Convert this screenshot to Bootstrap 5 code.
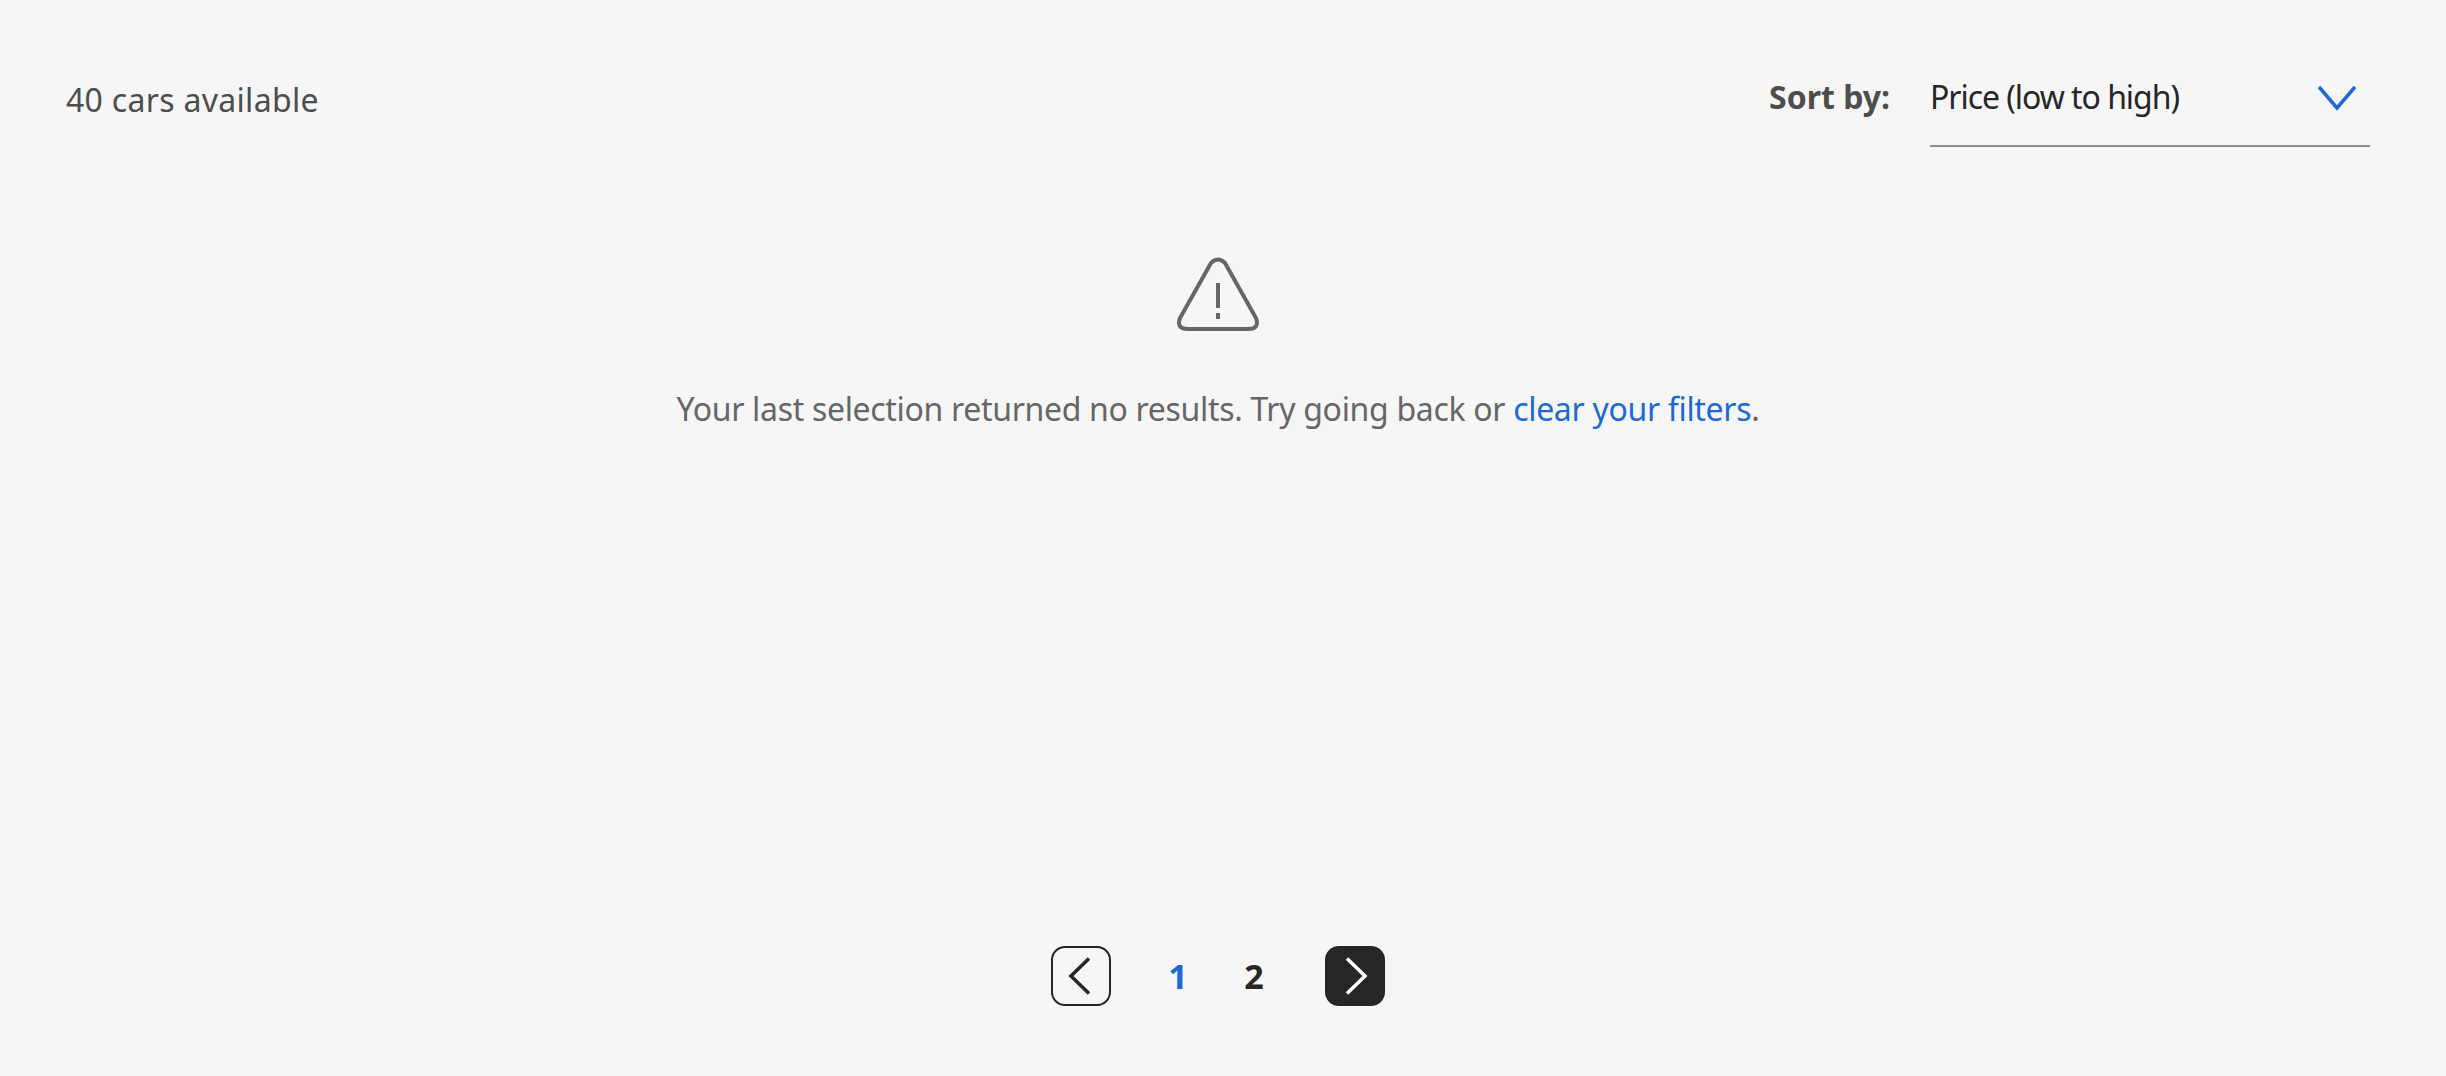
<!DOCTYPE html>
<html lang="en">
<head>
    <meta charset="UTF-8">
    <meta name="viewport" content="width=device-width, initial-scale=1.0">
    <title>Cars</title>
    <link href="https://cdn.jsdelivr.net/npm/bootstrap@5.3.0/dist/css/bootstrap.min.css" rel="stylesheet">
    <style>
        body { background: #f6f6f6; font-family: "Noto Sans", sans-serif; color: #262626; height: 1076px; overflow: hidden; }
        .results-page { height: 1076px; padding: 0 76px 70px 66px; }
        .top-bar { height: 147px; }
        .cars-count { font-size: 32px; color: #4d4d4d; letter-spacing: .3px; margin-top: 76px; }
        .sort-label { font-size: 32px; font-weight: 700; color: #4d4d4d; letter-spacing: 0; margin: 73px 40px 0 0; }
        .sort-select { width: 440px; height: 147px; border-bottom: 2px solid #8e8e8e; padding: 72px 14px 0 0; font-size: 32px; letter-spacing: -1.05px; line-height: 50px; }
        .sort-select svg { margin-top: 13px; }
        .empty-box { padding-top: 109px; color: #666; }
        .empty-text { font-size: 32px; letter-spacing: -.32px; margin-top: 53px; white-space: nowrap; }
        .empty-text a { color: #1c69d4; text-decoration: none; }
        .pager .page-item .page-link { margin-left: 0; background: none; border: 0; font-size: 34px; font-weight: 700; color: #262626; padding: 0; width: 60px; height: 60px; display: flex; align-items: center; justify-content: center; }
        .pager .page-num { margin: 0 8px; }
        .pager .page-num.active .page-link { color: #1c69d4; }
        .pager .page-item .page-link.nav-prev { border: 2px solid #262626; border-radius: 14px; margin-right: 29px; }
        .pager .page-item .page-link.nav-next { background: #262626; border-radius: 14px; margin-left: 33px; }
    </style>
</head>
<body>
    <div class="results-page d-flex flex-column">
        <div class="top-bar d-flex justify-content-between align-items-start">
            <div class="cars-count">40 cars available</div>
            <div class="d-flex align-items-start">
                <span class="sort-label">Sort by:</span>
                <div class="sort-select d-flex justify-content-between align-items-start">
                    <span>Price (low to high)</span>
                    <svg width="38" height="26" viewBox="0 0 38 26"><path d="M1 2 19 23 37 2" fill="none" stroke="#1c69d4" stroke-width="3.5"/></svg>
                </div>
            </div>
        </div>

        <div class="empty-box flex-grow-1 d-flex flex-column align-items-center">
            <svg width="84" height="76" viewBox="0 0 84 76"><path d="M35 7 Q42 0 49 7 L80 62 Q84 73 72 73 H12 Q0 73 4 62 Z" fill="none" stroke="#666" stroke-width="4"/><path d="M40 27h4v25h-4zM40 57h4v6h-4z" fill="#666"/></svg>
            <p class="empty-text">Your last selection returned no results. Try going back or <a href="#">clear your filters</a>.</p>
        </div>

        <nav>
            <ul class="pagination pager justify-content-center m-0">
                <li class="page-item"><a class="page-link nav-prev" href="#"><svg width="28" height="38" viewBox="0 0 28 38"><path d="M22 1.500 4 19 22 36.500" fill="none" stroke="#262626" stroke-width="3.500"/></svg></a></li>
                <li class="page-item page-num active"><a class="page-link" href="#">1</a></li>
                <li class="page-item page-num"><a class="page-link" href="#">2</a></li>
                <li class="page-item"><a class="page-link nav-next" href="#"><svg width="28" height="38" viewBox="0 0 28 38"><path d="M6 1.500 24 19 6 36.500" fill="none" stroke="#fff" stroke-width="3.500"/></svg></a></li>
            </ul>
        </nav>
    </div>
    <script src="https://cdn.jsdelivr.net/npm/bootstrap@5.3.0/dist/js/bootstrap.bundle.min.js"></script>
</body>
</html>
